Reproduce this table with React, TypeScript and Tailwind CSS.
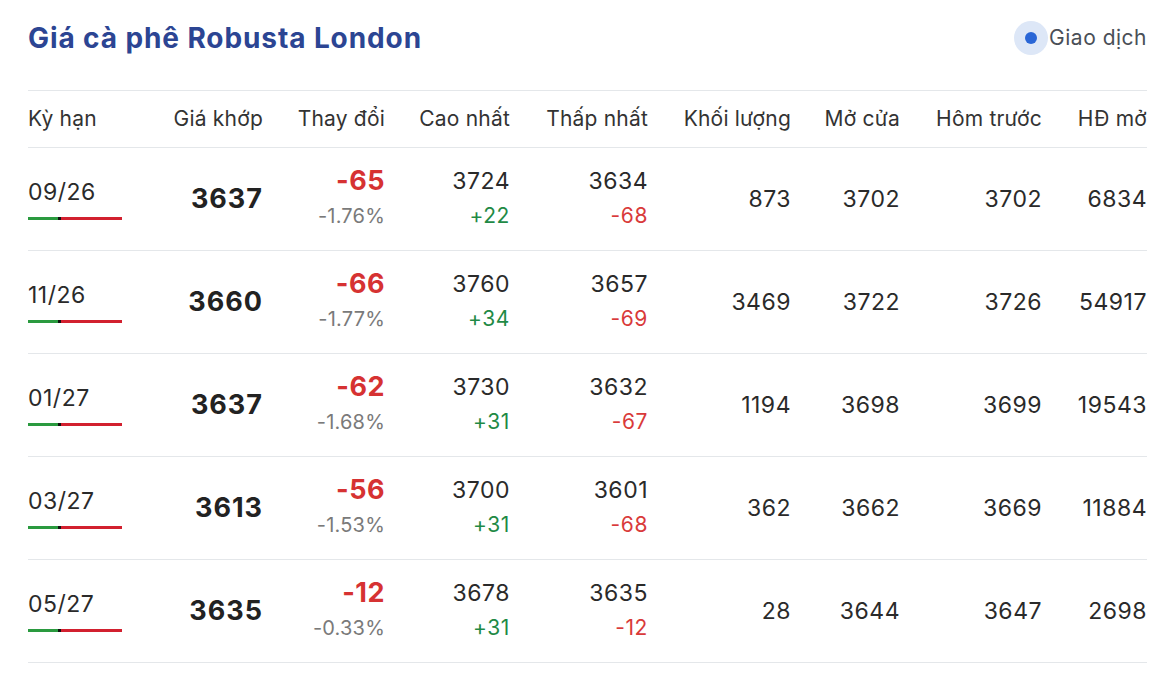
const rows = [
  { term: "09/26", price: "3637", change: "-65", pct: "-1.76%", high: "3724", highD: "+22", low: "3634", lowD: "-68", vol: "873", open: "3702", prev: "3702", oi: "6834" },
  { term: "11/26", price: "3660", change: "-66", pct: "-1.77%", high: "3760", highD: "+34", low: "3657", lowD: "-69", vol: "3469", open: "3722", prev: "3726", oi: "54917" },
  { term: "01/27", price: "3637", change: "-62", pct: "-1.68%", high: "3730", highD: "+31", low: "3632", lowD: "-67", vol: "1194", open: "3698", prev: "3699", oi: "19543" },
  { term: "03/27", price: "3613", change: "-56", pct: "-1.53%", high: "3700", highD: "+31", low: "3601", lowD: "-68", vol: "362", open: "3662", prev: "3669", oi: "11884" },
  { term: "05/27", price: "3635", change: "-12", pct: "-0.33%", high: "3678", highD: "+31", low: "3635", lowD: "-12", vol: "28", open: "3644", prev: "3647", oi: "2698" },
];

const headers = ["Giá khớp", "Thay đổi", "Cao nhất", "Thấp nhất", "Khối lượng", "Mở cửa", "Hôm trước", "HĐ mở"];

const grid = "grid grid-cols-[140px_95px_122px_125px_138px_143px_109px_142px_105px]";

export default function App() {
  return (
    <div className="min-h-[680px] w-[1170px] bg-white pl-[28px] pr-[23px] text-[#2a2a2a]" style={{ fontFamily: "Inter, 'Noto Sans', sans-serif" }}>
      <div className="flex h-[90px] items-center justify-between pb-[14px]">
        <h1 className="text-[28px] font-bold tracking-[0.9px] text-[#2c4593]">Giá cà phê Robusta London</h1>
        <div className="flex items-center">
          <span className="flex h-[34px] w-[34px] items-center justify-center rounded-full bg-[#dde7f7]">
            <span className="h-[12px] w-[12px] rounded-full bg-[#2a66d6]" />
          </span>
          <span className="ml-[1px] text-[21px] tracking-[0.5px] text-[#4a4f57]">Giao dịch</span>
        </div>
      </div>

      <div className={`${grid} h-[58px] items-center border-y border-[#e4e7ea] text-[21px] tracking-[0.2px] text-[#333]`}>
        <div>Kỳ hạn</div>
        {headers.map((h) => (
          <div key={h} className="text-right">{h}</div>
        ))}
      </div>

      {rows.map((r) => (
        <div key={r.term} className={`${grid} h-[103px] items-center border-b border-[#e4e7ea] text-[23px] tracking-[0.5px] text-[#2a2a2a]`}>
          <div className="flex flex-col">
            <span className="leading-[28px]">{r.term}</span>
            <div className="mt-[11px] flex h-[3px] w-[94px]">
              <span className="w-[30px] bg-[#2a9a3f]" />
              <span className="w-[3px] bg-[#111]" />
              <span className="flex-1 bg-[#d2202f]" />
            </div>
          </div>
          <div className="text-right text-[27px] font-bold tracking-[1px] text-[#222]">{r.price}</div>
          <div className="flex flex-col items-end">
            <span className="text-[27px] font-bold leading-[34px] tracking-[0.5px] text-[#d63232]">{r.change}</span>
            <span className="text-[20px] leading-[36px] tracking-[0.2px] text-[#7a7a7a]">{r.pct}</span>
          </div>
          <div className="flex flex-col items-end">
            <span className="leading-[34px]">{r.high}</span>
            <span className="text-[21px] leading-[36px] tracking-[0.6px] text-[#1f8a46]">{r.highD}</span>
          </div>
          <div className="flex flex-col items-end">
            <span className="leading-[34px]">{r.low}</span>
            <span className="text-[21px] leading-[36px] tracking-[0.6px] text-[#d93a3a]">{r.lowD}</span>
          </div>
          <div className="text-right">{r.vol}</div>
          <div className="text-right">{r.open}</div>
          <div className="text-right">{r.prev}</div>
          <div className="text-right">{r.oi}</div>
        </div>
      ))}
    </div>
  );
}
